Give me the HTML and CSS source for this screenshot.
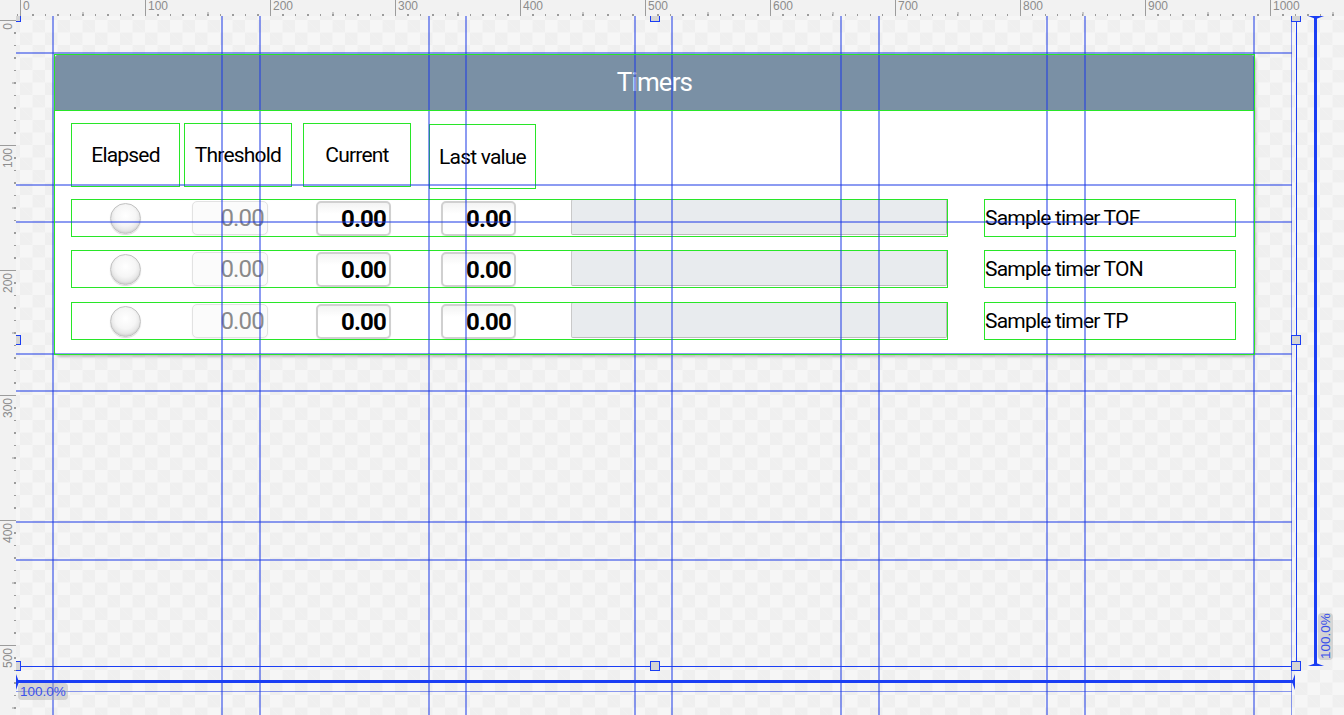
FILE: index.html
```html
<!DOCTYPE html>
<html lang="en">
<head>
  <meta charset="UTF-8" />
  <title>Timers - screen editor</title>
  <link rel="stylesheet" href="styles.css">
</head>
<body>
  <div class="editor">
    <div class="corner"></div>

    <div class="ruler ruler-h">
      <span class="mark">0</span>
      <span class="mark">100</span>
      <span class="mark">200</span>
      <span class="mark">300</span>
      <span class="mark">400</span>
      <span class="mark">500</span>
      <span class="mark">600</span>
      <span class="mark">700</span>
      <span class="mark">800</span>
      <span class="mark">900</span>
      <span class="mark">1000</span>
    </div>

    <div class="ruler ruler-v">
      <span class="mark"><span class="mark-text">0</span></span>
      <span class="mark"><span class="mark-text">100</span></span>
      <span class="mark"><span class="mark-text">200</span></span>
      <span class="mark"><span class="mark-text">300</span></span>
      <span class="mark"><span class="mark-text">400</span></span>
      <span class="mark"><span class="mark-text">500</span></span>
    </div>

    <div class="canvas">
      <section class="panel">
        <header class="panel-title">Timers</header>
        <div class="panel-body">
          <div class="col-heads">
            <div class="col-head head-elapsed">Elapsed</div>
            <div class="col-head head-threshold">Threshold</div>
            <div class="col-head head-current">Current</div>
            <div class="col-head head-last">Last value</div>
          </div>

          <div class="rows">
            <div class="row">
              <div class="row-main">
                <span class="led"></span>
                <span class="field field-off">0.00</span>
                <span class="field field-current">0.00</span>
                <span class="field field-last">0.00</span>
                <span class="bar"></span>
              </div>
              <div class="row-label">Sample timer TOF</div>
            </div>
            <div class="row">
              <div class="row-main">
                <span class="led"></span>
                <span class="field field-off">0.00</span>
                <span class="field field-current">0.00</span>
                <span class="field field-last">0.00</span>
                <span class="bar"></span>
              </div>
              <div class="row-label">Sample timer TON</div>
            </div>
            <div class="row">
              <div class="row-main">
                <span class="led"></span>
                <span class="field field-off">0.00</span>
                <span class="field field-current">0.00</span>
                <span class="field field-last">0.00</span>
                <span class="bar"></span>
              </div>
              <div class="row-label">Sample timer TP</div>
            </div>
          </div>
        </div>
      </section>

      <!-- layout guides -->
      <div class="guides-v">
        <span></span><span></span><span></span><span></span><span></span><span></span>
        <span></span><span></span><span></span><span></span><span></span><span></span>
        <span class="thin"></span>
      </div>
      <div class="guides-h">
        <span></span><span></span><span></span><span></span><span></span><span></span><span></span>
        <span class="thin"></span>
      </div>

      <!-- screen selection frame -->
      <div class="frame">
        <span class="handle h-tl"></span>
        <span class="handle h-tm"></span>
        <span class="handle h-tr"></span>
        <span class="handle h-ml"></span>
        <span class="handle h-mr"></span>
        <span class="handle h-bl"></span>
        <span class="handle h-bm"></span>
        <span class="handle h-br"></span>
      </div>

      <div class="dim dim-v"><span class="dim-label">100.0%</span></div>
      <div class="dim dim-h"><span class="dim-label">100.0%</span></div>
    </div>
  </div>
</body>
</html>
```

FILE: styles.css
```css
body {
  margin: 0;
  overflow: hidden;
  background: #f2f2f2;
  font-family: Roboto, "Liberation Sans", sans-serif;
  color: #000;
}

.editor {
  display: grid;
  grid-template-columns: 16px 1fr;
  grid-template-rows: 16px 1fr;
  width: 1344px;
  height: 715px;
}

/* rulers */

.corner {
  background: #f2f2f2;
}

.ruler {
  background-color: #f2f2f2;
  overflow: hidden;
  font-family: "Liberation Sans", Arial, sans-serif;
  font-size: 12px;
  color: #8c8c8c;
}

.ruler-h {
  display: flex;
  padding-left: 4px;
  background-image:
    repeating-linear-gradient(to right, #9c9c9c 0 1px, transparent 1px 12.5px),
    repeating-linear-gradient(to right, #9c9c9c 0 1px, transparent 1px 125px);
  background-size: 100% 2px, 100% 4px;
  background-position: 4px 100%, 66.5px 100%;
  background-repeat: repeat-x;
}

.ruler-h .mark {
  flex: 0 0 125px;
  box-sizing: border-box;
  height: 16px;
  border-left: 1px solid #9c9c9c;
  padding-left: 2px;
  line-height: 13px;
}

.ruler-v {
  display: flex;
  flex-direction: column;
  padding-top: 4px;
  background-image:
    repeating-linear-gradient(to bottom, #9c9c9c 0 1px, transparent 1px 12.5px),
    repeating-linear-gradient(to bottom, #9c9c9c 0 1px, transparent 1px 125px);
  background-size: 2px 100%, 4px 100%;
  background-position: 100% 4px, 100% 66.5px;
  background-repeat: repeat-y;
}

.ruler-v .mark {
  flex: 0 0 125px;
  box-sizing: border-box;
  width: 16px;
  border-top: 1px solid #9c9c9c;
  padding: 2px 0 0 2px;
}

.ruler-v .mark-text {
  display: block;
  writing-mode: vertical-rl;
  transform: rotate(180deg);
  line-height: 12px;
}

/* canvas */

.canvas {
  position: relative;
  overflow: hidden;
  box-sizing: border-box;
  padding: 38px 0 0 38px;
  background-color: #f6f6f6;
  background-image:
    linear-gradient(45deg, #efefef 25%, transparent 25%, transparent 75%, #efefef 75%),
    linear-gradient(45deg, #efefef 25%, transparent 25%, transparent 75%, #efefef 75%);
  background-size: 25px 25px;
  background-position: 4px 4px, 16.5px 16.5px;
}

/* timers panel */

.panel {
  position: relative;
  width: 1201px;
  height: 301px;
  background: #fff;
  border-radius: 6px;
  box-shadow: 1px 2px 3px rgba(0, 0, 0, 0.22);
}

.panel::after {
  content: '';
  position: absolute;
  inset: 0;
  z-index: 3;
  border: 1px solid #28e628;
  pointer-events: none;
}

.panel-title {
  position: relative;
  height: 57px;
  display: flex;
  align-items: center;
  justify-content: center;
  background: #7a90a5;
  border-radius: 6px 6px 0 0;
  color: #fff;
  font-size: 26px;
  letter-spacing: -0.9px;
  padding-bottom: 2px;
  box-sizing: border-box;
}

.panel-title::after {
  content: '';
  position: absolute;
  inset: 0;
  z-index: 3;
  border: 1px solid #28e628;
}

.panel-body {
  padding: 12px 0 0 17px;
}

.col-heads {
  display: flex;
  align-items: flex-start;
  height: 66px;
}

.col-head {
  display: flex;
  align-items: center;
  justify-content: center;
  box-sizing: border-box;
  height: 64px;
  outline: 1px solid #28e628;
  outline-offset: -1px;
  font-size: 21px;
  letter-spacing: -0.8px;
}

.head-elapsed { width: 109px; }
.head-threshold { width: 108px; margin-left: 4px; }
.head-current { width: 108px; margin-left: 11px; }
.head-last { width: 107px; height: 65px; margin-left: 18px; margin-top: 1px; }

.rows {
  display: flex;
  flex-direction: column;
  gap: 13px;
  margin-top: 10px;
}

.rows .row:last-child {
  margin-top: 1px;
}

.row {
  display: flex;
  height: 38px;
}

.row-main {
  display: flex;
  align-items: center;
  width: 877px;
  height: 38px;
  outline: 1px solid #28e628;
  outline-offset: -1px;
}

.led {
  width: 31px;
  height: 31px;
  margin-left: 39px;
  box-sizing: border-box;
  border-radius: 50%;
  border: 1px solid #c2c2c2;
  background: radial-gradient(circle at 50% 40%, #ffffff 0%, #f6f6f6 45%, #dedede 78%, #c4c4c4 100%);
  box-shadow: 0 1px 1px rgba(0, 0, 0, 0.15), inset 0 -1px 2px rgba(0, 0, 0, 0.08);
}

.field {
  box-sizing: border-box;
  width: 75px;
  height: 35px;
  padding-right: 3px;
  border-radius: 5px;
  text-align: right;
  font-size: 24px;
  line-height: 33px;
  font-weight: bold;
  letter-spacing: -0.8px;
}

.field-off {
  width: 76px;
  height: 34px;
  margin-left: 51px;
  line-height: 32px;
  border: 1px solid #e2e2e2;
  background: #fbfbfb;
  color: #8a8a8a;
  font-weight: normal;
  box-shadow: 0 1px 2px rgba(0, 0, 0, 0.05);
}

.field-current,
.field-last {
  border: 2px solid #d0d0d0;
  background: linear-gradient(#f3f3f3, #ffffff 35%);
  box-shadow: 0 1px 1px rgba(0, 0, 0, 0.08);
}

.field-current { margin-left: 48px; }
.field-last { margin-left: 50px; }

.bar {
  align-self: flex-start;
  box-sizing: border-box;
  width: 376px;
  height: 36px;
  margin-left: 55px;
  background: #e8ebee;
  border: 1px solid #c9c9c9;
  border-right-color: #bdbdbd;
  border-bottom-color: #bdbdbd;
  border-radius: 2px;
}

.row-label {
  display: flex;
  align-items: center;
  box-sizing: border-box;
  width: 252px;
  height: 38px;
  margin-left: 36px;
  padding-left: 1px;
  outline: 1px solid #28e628;
  outline-offset: -1px;
  font-size: 21px;
  letter-spacing: -0.8px;
}

/* guides */

.guides-v span,
.guides-h span {
  position: absolute;
  z-index: 1;
  background: rgba(25, 55, 230, 0.5);
}

.guides-v span {
  top: 0;
  bottom: 0;
  width: 2px;
}

.guides-h span {
  left: 0;
  width: 1276px;
  height: 2px;
}

.guides-v span:nth-child(1) { left: 36px; }
.guides-v span:nth-child(2) { left: 205px; }
.guides-v span:nth-child(3) { left: 243px; }
.guides-v span:nth-child(4) { left: 412px; }
.guides-v span:nth-child(5) { left: 449px; }
.guides-v span:nth-child(6) { left: 618px; }
.guides-v span:nth-child(7) { left: 655px; }
.guides-v span:nth-child(8) { left: 824px; }
.guides-v span:nth-child(9) { left: 862px; }
.guides-v span:nth-child(10) { left: 1030px; }
.guides-v span:nth-child(11) { left: 1068px; }
.guides-v span:nth-child(12) { left: 1237px; }
.guides-v span.thin { left: 1275px; width: 1px; }

.guides-h span:nth-child(1) { top: 36px; }
.guides-h span:nth-child(2) { top: 168px; }
.guides-h span:nth-child(3) { top: 205px; }
.guides-h span:nth-child(4) { top: 337px; }
.guides-h span:nth-child(5) { top: 374px; }
.guides-h span:nth-child(6) { top: 505px; }
.guides-h span:nth-child(7) { top: 543px; }
.guides-h span.thin { top: 675px; height: 1px; }

/* selection frame */

.frame {
  position: absolute;
  z-index: 4;
  left: 0;
  top: 1px;
  width: 1281px;
  height: 650px;
  box-sizing: border-box;
  border-right: 1px solid #1b3ef4;
  border-bottom: 1px solid #1b3ef4;
}

.handle {
  position: absolute;
  width: 10px;
  height: 10px;
  box-sizing: border-box;
  background: #d4d4d4;
  border: 1px solid #1b3ef4;
}

.h-tl { left: -5px; top: -5px; }
.h-tm { left: 634px; top: -5px; }
.h-tr { left: 1275px; top: -5px; }
.h-ml { left: -5px; top: 318px; }
.h-mr { left: 1275px; top: 318px; }
.h-bl { left: -5px; top: 644px; }
.h-bm { left: 634px; top: 644px; }
.h-br { left: 1275px; top: 644px; }

/* size indicators */

.dim {
  position: absolute;
  z-index: 4;
  background: #1b3ef4;
}

.dim::before,
.dim::after {
  content: '';
  position: absolute;
  width: 0;
  height: 0;
}

.dim-v {
  left: 1298px;
  top: 0;
  width: 3px;
  height: 650px;
}

.dim-v::before {
  left: -6.5px;
  top: 0;
  border-left: 8px solid transparent;
  border-right: 8px solid transparent;
  border-top: 3px solid #1b3ef4;
}

.dim-v::after {
  left: -6.5px;
  bottom: 0;
  border-left: 8px solid transparent;
  border-right: 8px solid transparent;
  border-bottom: 3px solid #1b3ef4;
}

.dim-h {
  left: 0;
  top: 664px;
  width: 1279px;
  height: 3px;
}

.dim-h::before {
  left: 0;
  top: -6.5px;
  border-top: 8px solid transparent;
  border-bottom: 8px solid transparent;
  border-left: 3px solid #1b3ef4;
}

.dim-h::after {
  right: 0;
  top: -6.5px;
  border-top: 8px solid transparent;
  border-bottom: 8px solid transparent;
  border-right: 3px solid #1b3ef4;
}

.dim-label {
  position: absolute;
  background: rgba(175, 175, 175, 0.45);
  border-radius: 4px;
  color: #3b52ea;
  font-family: "Liberation Sans", Arial, sans-serif;
  font-size: 13.5px;
  white-space: nowrap;
}

.dim-v .dim-label {
  left: 4px;
  top: 597px;
  width: 15px;
  height: 47px;
  line-height: 15px;
  text-align: center;
  writing-mode: vertical-rl;
  transform: rotate(180deg);
}

.dim-h .dim-label {
  left: 2px;
  top: 3px;
  height: 17px;
  line-height: 17px;
  padding: 0 2px;
}
```
